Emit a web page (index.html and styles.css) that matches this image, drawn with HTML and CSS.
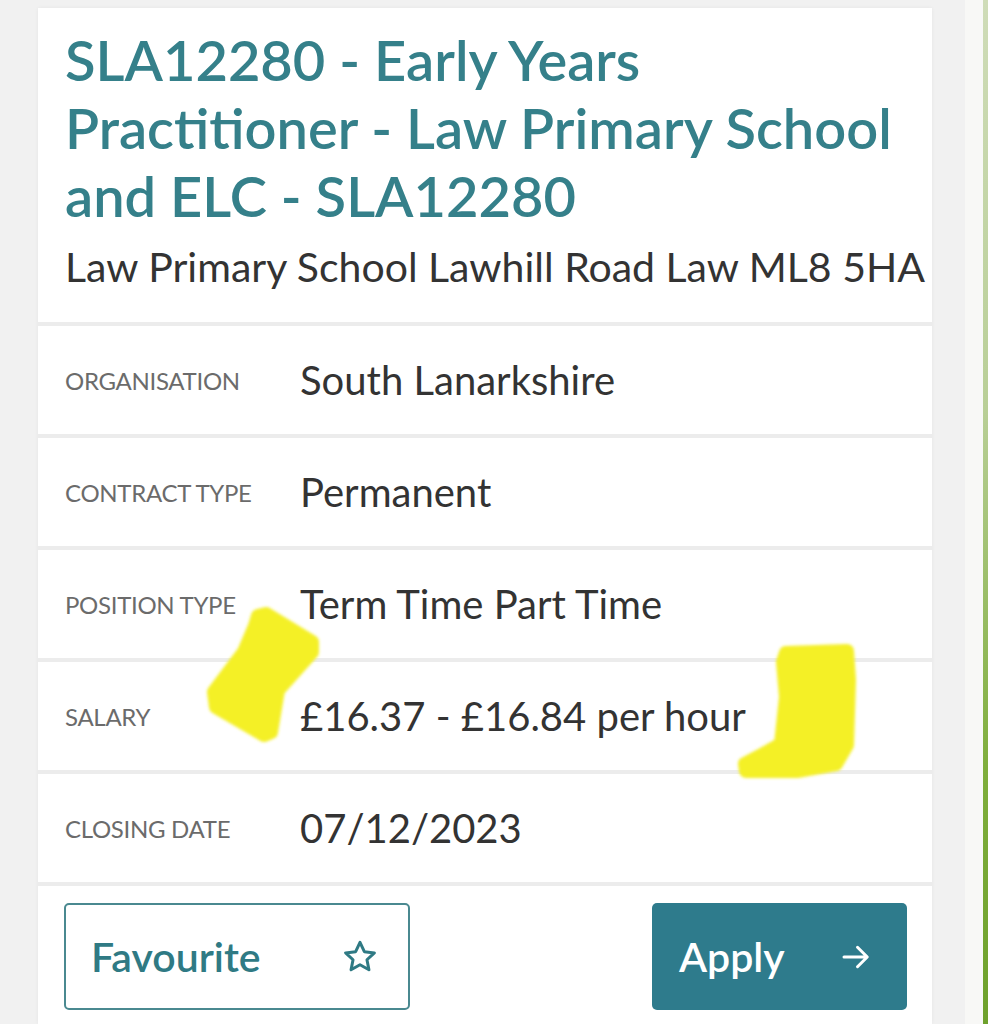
FILE: index.html
```html
<!DOCTYPE html>
<html lang="en">
<head>
<meta charset="utf-8">
<title>SLA12280 - Early Years Practitioner</title>
<link rel="stylesheet" href="styles.css">
</head>
<body>
<div class="page">
  <main class="column">
    <div class="card">
      <section class="head">
        <h1 class="title">SLA12280 - Early Years Practitioner - Law Primary School and ELC - SLA12280</h1>
        <p class="address">Law Primary School Lawhill Road Law ML8 5HA</p>
      </section>
      <div class="row"><span class="label">ORGANISATION</span><span class="value">South Lanarkshire</span></div>
      <div class="row"><span class="label">CONTRACT TYPE</span><span class="value">Permanent</span></div>
      <div class="row"><span class="label">POSITION TYPE</span><span class="value">Term Time Part Time</span></div>
      <div class="row"><span class="label">SALARY</span><span class="value">£16.37 - £16.84 per hour</span></div>
      <div class="row"><span class="label">CLOSING DATE</span><span class="value">07/12/2023</span></div>
      <div class="actions">
        <button class="btn fav">Favourite
          <svg class="ico" viewBox="0 0 24 24" width="38" height="38"><path d="M12 2.8l2.75 5.85 6.35.75-4.7 4.35 1.25 6.3L12 16.9l-5.65 3.15 1.25-6.3-4.7-4.35 6.35-.75z" fill="none" stroke="currentColor" stroke-width="1.9" stroke-linejoin="round"/></svg>
        </button>
        <button class="btn apply">Apply
          <svg class="ico" viewBox="0 0 24 24" width="36" height="36"><path d="M4 12h15M13 5.5l6.5 6.5-6.5 6.5" fill="none" stroke="currentColor" stroke-width="2" stroke-linecap="round" stroke-linejoin="round"/></svg>
        </button>
      </div>
    </div>
    <svg class="marks" viewBox="0 0 988 1024" width="988" height="1024">
      <defs><filter id="soft" x="-10%" y="-10%" width="120%" height="120%"><feGaussianBlur stdDeviation="1.6"/></filter></defs>
      <g filter="url(#soft)" fill="#f4f026" stroke="#f4f026" stroke-width="14" stroke-linejoin="round">
        <path d="M258 616 L266 614 L312 642 L312 652 L278 690 L271 732 L264 735 L216 707 L214 692 L244 652 L255 626 Z"/>
        <path d="M786 653 L847 651 L849 680 L847 745 L836 764 L797 771 L746 771 L745 764 L760 756 L781 744 L786 697 L783 662 Z"/>
      </g>
    </svg>
  </main>
  <div class="edge"></div>
  <div class="green"></div>
</div>
</body>
</html>
```
FILE: styles.css
```css
* { box-sizing: border-box; }
html, body { margin: 0; padding: 0; }
body {
  background: #f1f1f1;
  font-family: Lato, "Liberation Sans", sans-serif;
  width: 988px;
  height: 1024px;
  overflow: hidden;
}
.page {
  display: flex;
  height: 1024px;
}
.column {
  position: relative;
  width: 965px;
  padding: 8px 33px 0 38px;
}
.edge {
  width: 18px;
  background: #f8f8f6;
}
.green {
  width: 5px;
  background: linear-gradient(#cfdcb8 0%, #b9cf97 40%, #7fae3c 75%, #6ea12c 100%);
}
.card {
  display: flex;
  flex-direction: column;
  gap: 4px;
  background: #ececec;
  box-shadow: 0 0 4px rgba(0,0,0,0.05);
}
.head {
  background: #fff;
  height: 314px;
  padding: 18px 0 0 27px;
}
.title {
  margin: 0;
  font-size: 56px;
  line-height: 68px;
  font-weight: 600;
  color: #35808a;
  width: 860px;
}
.address {
  margin: 12px 0 0;
  font-size: 41px;
  line-height: 50px;
  color: #333;
  white-space: nowrap;
}
.row {
  background: #fff;
  height: 108px;
  display: flex;
  align-items: center;
  padding-left: 27px;
}
.label {
  width: 235px;
  font-size: 24px;
  color: #6b6b6b;
  letter-spacing: -0.3px;
}
.value {
  font-size: 40px;
  color: #333;
}
.actions {
  background: #fff;
  height: 138px;
  display: flex;
  justify-content: space-between;
  align-items: flex-start;
  padding: 17px 25px 0 26px;
}
.btn {
  display: flex;
  align-items: center;
  justify-content: space-between;
  height: 107px;
  border-radius: 5px;
  font-family: Lato, "Liberation Sans", sans-serif;
  font-size: 41px;
  font-weight: 600;
  cursor: pointer;
}
.fav {
  width: 346px;
  background: #fff;
  border: 2px solid #4a8990;
  color: #2f7a84;
  padding: 0 29px 0 25px;
}
.apply {
  width: 255px;
  background: #2e7b8c;
  border: none;
  color: #fff;
  padding: 0 33px 0 27px;
}
.ico { display: block; }
.marks {
  position: absolute;
  left: 0;
  top: 0;
  pointer-events: none;
}
```
